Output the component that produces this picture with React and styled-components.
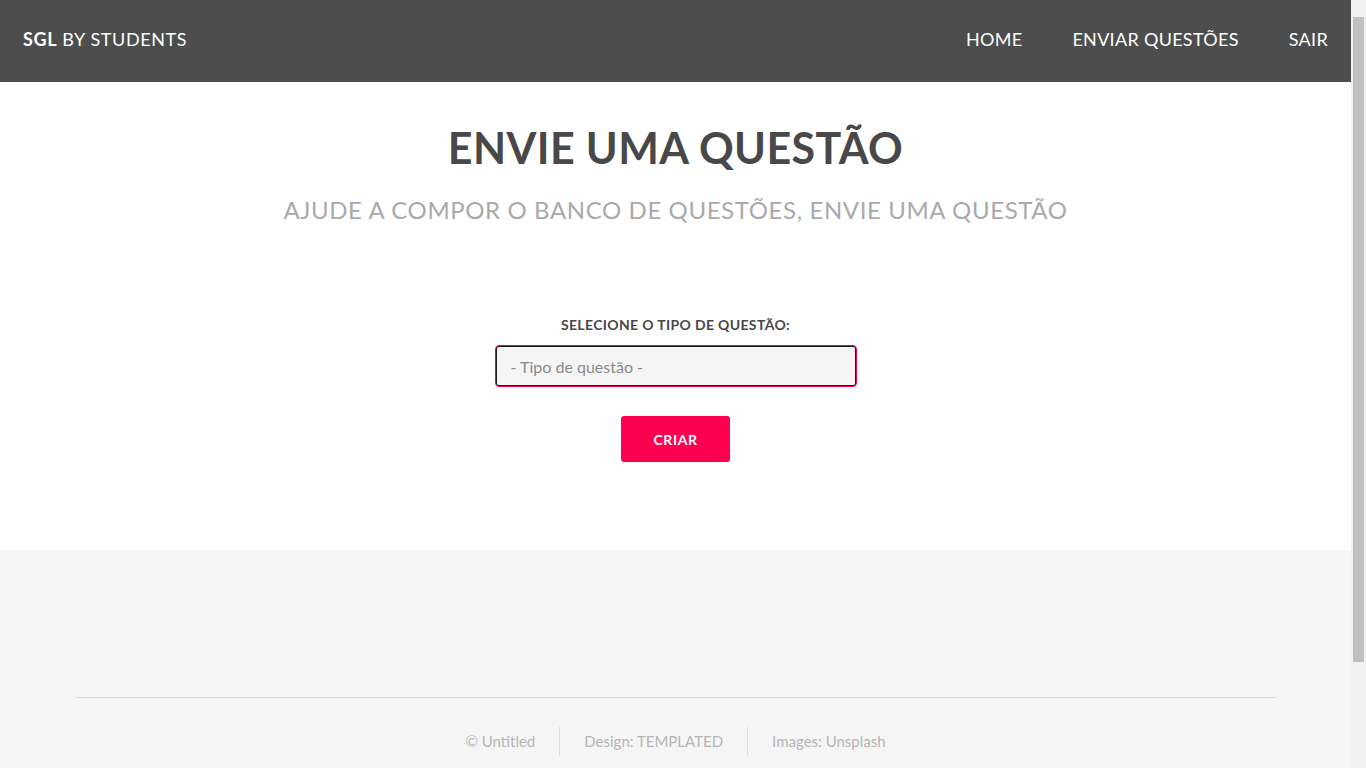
import React from "react";
import styled, { createGlobalStyle } from "styled-components";

const Global = createGlobalStyle`
  html, body { margin: 0; padding: 0; }
  html {
    background:
      linear-gradient(#c1c1c1, #c1c1c1) right 2px top 17px / 11px 645px no-repeat,
      #f1f1f1;
  }
  body {
    margin-right: 15px;
    font-family: "Lato", "Open Sans", sans-serif;
    background: #fff;
    color: #777;
  }
  * { box-sizing: border-box; }
`;

const Header = styled.header`
  height: 82px;
  background: #4d4d4d;
  display: flex;
  align-items: center;
  justify-content: space-between;
  padding: 0 23px 4px;
`;

const Logo = styled.a`
  color: #fff;
  font-size: 18px;
  text-transform: uppercase;
  letter-spacing: 0.6px;
  text-decoration: none;
  b { font-weight: 700; }
`;

const Nav = styled.nav`
  display: flex;
  gap: 50px;
`;

const NavLink = styled.a`
  color: #fff;
  font-size: 18px;
  text-decoration: none;
  letter-spacing: 0.3px;
`;

const Main = styled.section`
  background: #fff;
  height: 468px;
  display: flex;
  flex-direction: column;
  align-items: center;
  padding-top: 44px;
`;

const Title = styled.h2`
  margin: 0;
  font-size: 43px;
  line-height: 1;
  font-weight: 700;
  color: #484848;
  letter-spacing: 0.4px;
`;

const Subtitle = styled.p`
  margin: 29px 0 0;
  font-size: 24px;
  line-height: 1;
  color: #aaa;
  letter-spacing: 0.6px;
`;

const Form = styled.form`
  margin-top: 96px;
  display: flex;
  flex-direction: column;
  align-items: center;
`;

const Label = styled.label`
  font-size: 14px;
  font-weight: 700;
  color: #484848;
  line-height: 1;
  letter-spacing: 0.35px;
`;

const SelectBox = styled.div`
  margin-top: 13px;
  width: 362px;
  height: 42px;
  border-radius: 4px;
  border: 1px solid #f2004f;
  box-shadow: inset 0 0 0 1px #1c1c1c;
  background: #f5f5f5;
  display: flex;
  align-items: center;
  padding: 0 15px;
  font-size: 16px;
  color: #8a8a8a;
`;

const Button = styled.button`
  margin-top: 29px;
  width: 109px;
  height: 46px;
  border: 0;
  border-radius: 3px;
  background: #ff0050;
  color: #fff;
  font-family: inherit;
  font-weight: 700;
  font-size: 14px;
  letter-spacing: 0.6px;
  text-transform: uppercase;
  cursor: pointer;
`;

const Footer = styled.footer`
  background: #f5f5f5;
  padding: 147px 0 113px;
`;

const Inner = styled.div`
  width: 1200px;
  margin: 0 auto;
  border-top: 1px solid #dcdcdc;
  padding-top: 29px;
  display: flex;
  justify-content: center;
`;

const Item = styled.span`
  font-size: 15px;
  color: #b5b5b5;
  line-height: 29px;
  padding: 0 24px;
  & + & { border-left: 1px solid #dcdcdc; }
`;

export default function App() {
  return (
    <>
      <Global />
      <Header>
        <Logo href="#"><b>SGL</b> by Students</Logo>
        <Nav>
          <NavLink href="#">HOME</NavLink>
          <NavLink href="#">ENVIAR QUESTÕES</NavLink>
          <NavLink href="#">SAIR</NavLink>
        </Nav>
      </Header>
      <Main>
        <Title>ENVIE UMA QUESTÃO</Title>
        <Subtitle>AJUDE A COMPOR O BANCO DE QUESTÕES, ENVIE UMA QUESTÃO</Subtitle>
        <Form onSubmit={(e) => e.preventDefault()}>
          <Label>SELECIONE O TIPO DE QUESTÃO:</Label>
          <SelectBox>- Tipo de questão -</SelectBox>
          <Button type="submit">Criar</Button>
        </Form>
      </Main>
      <Footer>
        <Inner>
          <Item>© Untitled</Item>
          <Item>Design: TEMPLATED</Item>
          <Item>Images: Unsplash</Item>
        </Inner>
      </Footer>
    </>
  );
}
